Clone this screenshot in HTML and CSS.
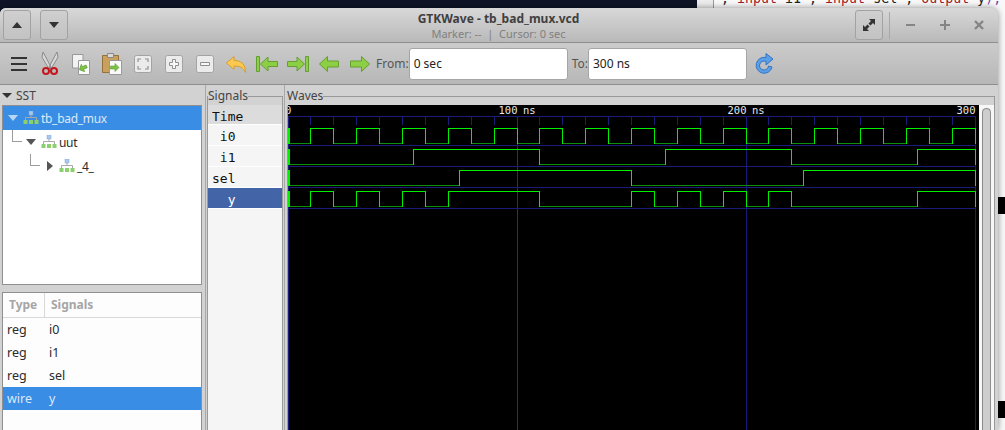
FILE: index.html
```html
<!DOCTYPE html>
<html lang="en">
<head>
  <meta charset="UTF-8">
  <meta name="viewport" content="width=device-width, initial-scale=1.0">
  <title>GTKWave - tb_bad_mux.vcd</title>
  <link rel="stylesheet" href="styles.css">
</head>
<body>
  <div class="desktop">
    <div class="terminal"></div>
    <div class="editor">
      <span class="code">, <b>input</b> i1 , <b>input</b> sel , <b>output</b> y<i>);</i></span>
    </div>
    <div class="edge-mark edge-mark-a"></div>
    <div class="edge-mark edge-mark-b"></div>

    <div class="window">
      <header class="titlebar">
        <div class="title-left">
          <button class="title-btn"><svg width="12" height="8" viewBox="0 0 12 8"><path d="M6 1 11 7H1z" fill="#333"/></svg></button>
          <button class="title-btn"><svg width="12" height="8" viewBox="0 0 12 8"><path d="M1 1H11L6 7z" fill="#333"/></svg></button>
        </div>
        <div class="title-text">
          <div class="title-main">GTKWave - tb_bad_mux.vcd</div>
          <div class="title-sub">Marker: --  |  Cursor: 0 sec</div>
        </div>
        <div class="title-right">
          <button class="title-btn"><svg width="14" height="14" viewBox="0 0 14 14"><path d="M13 1V7L11 5 8.500 7.500 6.500 5.500 9 3 7 1zM1 13V7L3 9 5.500 6.500 7.500 8.500 5 11 7 13z" fill="#333"/></svg></button>
          <span class="title-sep"></span>
          <svg class="win-ctl" width="12" height="12" viewBox="0 0 12 12"><path d="M1 6H10" stroke="#858585" stroke-width="2"/></svg>
          <svg class="win-ctl" width="12" height="12" viewBox="0 0 12 12"><path d="M1 6H11M6 1V11" stroke="#858585" stroke-width="2"/></svg>
          <svg class="win-ctl" width="12" height="12" viewBox="0 0 12 12"><path d="M2 2 10 10M10 2 2 10" stroke="#858585" stroke-width="2.400"/></svg>
        </div>
      </header>

      <div class="toolbar">
        <span class="tool"><svg width="24" height="24" viewBox="0 0 24 24"><path d="M4 7H20M4 13H20M4 19H20" transform="translate(0 -1)" stroke="#333" stroke-width="2"/></svg></span>
        <span class="tool"><svg width="24" height="24" viewBox="0 0 24 24">
          <path d="M5 0 13 15 11 17 4 5zM19 0 11 15 13 17 20 5z" fill="#d8d8d8" stroke="#8a8a8a"/>
          <circle cx="8" cy="19" r="3" fill="none" stroke="#c4161c" stroke-width="2"/>
          <circle cx="16" cy="19" r="3" fill="none" stroke="#c4161c" stroke-width="2"/>
        </svg></span>
        <span class="tool"><svg width="24" height="24" viewBox="0 0 24 24">
          <path d="M3.500 2.500H14V16H3.500z" fill="#f2f2f2" stroke="#999"/>
          <path d="M9.500 8.500H20.500V22.500H9.500z" fill="#fafafa" stroke="#999"/>
          <path d="M10 16 14 12V14.500H18V17.500H14V20z" transform="rotate(-25 14 16)" fill="#7cc243" stroke="#5b9a2c" stroke-width=".6"/>
        </svg></span>
        <span class="tool"><svg width="24" height="24" viewBox="0 0 24 24">
          <path d="M2.500 3.500H18.500V20.500H2.500z" fill="#c9a05e" stroke="#94713a"/>
          <path d="M7.500 1.500H13.500V5.500H7.500z" fill="#d9d9d9" stroke="#888"/>
          <path d="M9.500 8.500H21.500V22.500H9.500z" fill="#fafafa" stroke="#999"/>
          <path d="M19 15.500 15 11.500V14H10.500V17H15V19.500z" fill="#7cc243" stroke="#5b9a2c" stroke-width=".6"/>
        </svg></span>
        <span class="tool"><svg width="24" height="24" viewBox="0 0 24 24">
          <rect x="3.500" y="3.500" width="17" height="17" rx="2" fill="#ebebeb" stroke="#a3a3a3"/>
          <path d="M10 7H7V10M14 7H17V10M10 17H7V14M14 17H17V14" fill="none" stroke="#8f8f8f" stroke-width="1.200"/>
        </svg></span>
        <span class="tool"><svg width="24" height="24" viewBox="0 0 24 24">
          <rect x="3.500" y="3.500" width="17" height="17" rx="2" fill="#ebebeb" stroke="#a3a3a3"/>
          <path d="M10.500 7.500H13.500V10.500H16.500V13.500H13.500V16.500H10.500V13.500H7.500V10.500H10.500z" fill="#f7f7f7" stroke="#8f8f8f"/>
        </svg></span>
        <span class="tool"><svg width="24" height="24" viewBox="0 0 24 24">
          <rect x="3.500" y="3.500" width="17" height="17" rx="2" fill="#ebebeb" stroke="#a3a3a3"/>
          <path d="M7.500 10.500H16.500V13.500H7.500z" fill="#f7f7f7" stroke="#8f8f8f"/>
        </svg></span>
        <span class="tool"><svg width="24" height="24" viewBox="0 0 24 24">
          <path d="M2.500 11 10 4.500V8.500C17 8.500 21.500 12 21.500 20.500 19 15.500 16 14 10 14V17.500z" fill="#fbc94f" stroke="#d99e2b"/>
        </svg></span>
        <span class="tool"><svg width="24" height="24" viewBox="0 0 24 24">
          <path d="M1.500 4.500H4.500V19.500H1.500z" fill="#8ccf45" stroke="#649f30"/>
          <path d="M5.500 12 13 5V9.500H22.500V14.500H13V19z" fill="#8ccf45" stroke="#649f30"/>
        </svg></span>
        <span class="tool"><svg width="24" height="24" viewBox="0 0 24 24">
          <path d="M19.500 4.500H22.500V19.500H19.500z" fill="#8ccf45" stroke="#649f30"/>
          <path d="M18.500 12 11 5V9.500H1.500V14.500H11V19z" fill="#8ccf45" stroke="#649f30"/>
        </svg></span>
        <span class="tool"><svg width="24" height="24" viewBox="0 0 24 24">
          <path d="M2.500 12 10.500 4.500V9H21.500V15H10.500V19.500z" fill="#8ccf45" stroke="#649f30"/>
        </svg></span>
        <span class="tool"><svg width="24" height="24" viewBox="0 0 24 24">
          <path d="M21.500 12 13.500 4.500V9H2.500V15H13.500V19.500z" fill="#8ccf45" stroke="#649f30"/>
        </svg></span>
        <label class="range-label">From:</label>
        <input class="range-input" type="text" value="0 sec">
        <label class="range-label range-to">To:</label>
        <input class="range-input" type="text" value="300 ns">
        <span class="tool tool-reload"><svg width="24" height="24" viewBox="0 0 24 24">
          <path d="M14 5.500A8 8 0 1 0 20 15L16.500 14A4.500 4.500 0 1 1 14 9.500V13L21 7 14 1.500z" fill="#5b9fe8" stroke="#2f74c4"/>
        </svg></span>
      </div>

      <div class="panes">
        <aside class="sst">
          <div class="sst-head"><span class="arrow-down"></span>SST</div>
          <div class="tree">
            <div class="tree-row selected">
              <span class="twist twist-open"></span>
              <svg class="hier" width="16" height="14" viewBox="0 0 16 14"><use href="#hier-icon"/></svg>
              <span>tb_bad_mux</span>
            </div>
            <div class="tree-row level-1">
              <span class="twist twist-open"></span>
              <svg class="hier" width="16" height="14" viewBox="0 0 16 14"><use href="#hier-icon"/></svg>
              <span>uut</span>
            </div>
            <div class="tree-row level-2">
              <span class="twist twist-closed"></span>
              <svg class="hier" width="16" height="14" viewBox="0 0 16 14"><use href="#hier-icon"/></svg>
              <span>_4_</span>
            </div>
          </div>
          <div class="sig-list">
            <div class="sig-head"><span>Type</span><span>Signals</span></div>
            <div class="sig-row"><span>reg</span><span>i0</span></div>
            <div class="sig-row"><span>reg</span><span>i1</span></div>
            <div class="sig-row"><span>reg</span><span>sel</span></div>
            <div class="sig-row selected"><span>wire</span><span>y</span></div>
          </div>
        </aside>

        <fieldset class="frame signals">
          <legend>Signals</legend>
          <div class="name-row name-time">Time</div>
          <div class="name-row"> i0</div>
          <div class="name-row"> i1</div>
          <div class="name-row">sel</div>
          <div class="name-row name-selected">  y</div>
        </fieldset>

        <div class="handle"></div>

        <fieldset class="frame waves">
          <legend>Waves</legend>
          <div class="wave-body">
            <svg class="wave-canvas" width="691" height="325" viewBox="288 105 691 325">
              <g class="grid">
                <path class="grid-major" d="M517.500 116V430"/>
                <path d="M288.500 116V430M746.500 116V430M975.500 116V430"/>
                <path d="M288 116.500H976M288 145.500H976M288 166.500H976M288 187.500H976M288 208.500H976"/>
                <path d="M310.500 116V125M333.500 116V125M356.500 116V125M379.500 116V125M402.500 116V125M425.500 116V125M448.500 116V125M471.500 116V125M494.500 116V125M539.500 116V125M562.500 116V125M585.500 116V125M608.500 116V125M631.500 116V125M654.500 116V125M677.500 116V125M700.500 116V125M723.500 116V125M768.500 116V125M791.500 116V125M814.500 116V125M837.500 116V125M860.500 116V125M883.500 116V125M906.500 116V125M929.500 116V125M952.500 116V125"/>
              </g>
              <g class="wave-low">
                <path d="M288 143.500H310M333 143.500H356M379 143.500H402M425 143.500H448M471 143.500H494M517 143.500H539M562 143.500H585M608 143.500H631M654 143.500H677M700 143.500H723M746 143.500H768M791 143.500H814M837 143.500H860M883 143.500H906M929 143.500H952"/>
                <path d="M288 164.500H413M539 164.500H665M791 164.500H917"/>
                <path d="M288 185.500H459M631 185.500H803"/>
                <path d="M288 206.500H310M333 206.500H356M379 206.500H402M425 206.500H448M539 206.500H631M654 206.500H677M700 206.500H723M746 206.500H768M791 206.500H917"/>
              </g>
              <g class="wave-high">
                <path d="M310.500 143.500V128.500H333.500V143.500M356.500 143.500V128.500H379.500V143.500M402.500 143.500V128.500H425.500V143.500M448.500 143.500V128.500H471.500V143.500M494.500 143.500V128.500H517.500V143.500M539.500 143.500V128.500H562.500V143.500M585.500 143.500V128.500H608.500V143.500M631.500 143.500V128.500H654.500V143.500M677.500 143.500V128.500H700.500V143.500M723.500 143.500V128.500H746.500V143.500M768.500 143.500V128.500H791.500V143.500M814.500 143.500V128.500H837.500V143.500M860.500 143.500V128.500H883.500V143.500M906.500 143.500V128.500H929.500V143.500M952.500 143.500V128.500H975.500V143.500"/>
                <path d="M413.500 164.500V149.500H539.500V164.500M665.500 164.500V149.500H791.500V164.500M917.500 164.500V149.500H975.500V164.500"/>
                <path d="M459.500 185.500V170.500H631.500V185.500M803.500 185.500V170.500H975.500V185.500"/>
                <path d="M310.500 206.500V191.500H333.500V206.500M356.500 206.500V191.500H379.500V206.500M402.500 206.500V191.500H425.500V206.500M448.500 206.500V191.500H539.500V206.500M631.500 206.500V191.500H654.500V206.500M677.500 206.500V191.500H700.500V206.500M723.500 206.500V191.500H746.500V206.500M768.500 206.500V191.500H791.500V206.500M917.500 206.500V191.500H975.500V206.500"/>
              </g>
              <path class="wave-start" d="M289 128V144M289 149V165M289 170V186M289 191V207"/>
              <g class="wave-time">
                <text x="285" y="114">0</text>
                <text x="498.500" y="114">100</text>
                <text x="523" y="114">ns</text>
                <text x="727.500" y="114">200</text>
                <text x="752" y="114">ns</text>
                <text x="956.500" y="114">300</text>
              </g>
            </svg>
            <div class="wave-scroll"><div class="wave-thumb"></div></div>
          </div>
        </fieldset>
      </div>
    </div>
  </div>

  <svg class="defs" width="0" height="0">
    <g id="hier-icon">
      <rect x="6" y="0" width="4" height="4" fill="#a9c8ee" stroke="#7fa6d6" stroke-width=".5"/>
      <path d="M2.500 9V6.500H13.500V9M8 4V6.500" fill="none" stroke="#a8a8a8"/>
      <rect x="0.500" y="9" width="4" height="4" fill="#8ccf6e"/>
      <rect x="6" y="9" width="4" height="4" fill="#8ccf6e"/>
      <rect x="11.500" y="9" width="4" height="4" fill="#8ccf6e"/>
    </g>
  </svg>
</body>
</html>
```

FILE: styles.css
```css
* {
  box-sizing: border-box;
}

body {
  margin: 0;
  font-family: "Noto Sans", sans-serif;
  background-color: #f4f4f4;
}

.defs {
  position: absolute;
}

.desktop {
  position: relative;
  width: 1005px;
  height: 430px;
  overflow: hidden;
}

.terminal {
  position: absolute;
  left: 0;
  top: 0;
  width: 697px;
  height: 430px;
  background-color: #0f1526;
}

.editor {
  position: absolute;
  left: 697px;
  top: 0;
  width: 308px;
  height: 430px;
  padding-left: 24px;
  background: linear-gradient(to right, #ececec 16px, #9a9a9a 16px, #9a9a9a 17px, #f8f8f8 17px);
}

.code {
  display: block;
  margin-top: -9px;
  font: 13.3px/16px "DejaVu Sans Mono", monospace;
  color: #222;
  white-space: pre;
}

.code b {
  font-weight: normal;
  color: #a3182e;
}

.code i {
  font-style: normal;
  color: #7a3fb0;
}

.edge-mark {
  position: absolute;
  left: 998px;
  width: 7px;
  height: 17px;
  background-color: #000;
}

.edge-mark-a {
  top: 197px;
}

.edge-mark-b {
  top: 401px;
}

.window {
  position: absolute;
  left: 0;
  top: 8px;
  width: 998px;
  height: 422px;
  overflow: hidden;
  background-color: #d2d2d2;
  border-top-left-radius: 6px;
  border-top-right-radius: 8px;
  box-shadow: 0 0 6px rgba(0, 0, 0, 0.45);
}

/* title bar */
.titlebar {
  display: grid;
  grid-template-columns: 1fr auto 1fr;
  align-items: center;
  height: 35px;
  padding: 0 0 0 3px;
  background: linear-gradient(#d8d8d8, #b9b9b9);
  border-bottom: 1px solid #8e8e8e;
}

.title-left {
  display: flex;
  gap: 9px;
}

.title-right {
  display: flex;
  align-items: center;
  justify-content: flex-end;
}

.title-btn {
  display: flex;
  align-items: center;
  justify-content: center;
  width: 28px;
  height: 30px;
  padding: 0;
  background: linear-gradient(#cfcfcf, #c2c2c2);
  border: 1px solid #a2a2a2;
  border-radius: 3px;
}

.title-sep {
  width: 1px;
  height: 27px;
  margin: 0 15px 0 6px;
  background-color: #a8a8a8;
}

.win-ctl {
  margin-right: 22px;
}

.win-ctl:last-child {
  margin-right: 13px;
}

.title-text {
  margin-right: 4px;
  text-align: center;
}

.title-main {
  padding-top: 1px;
  font-size: 12px;
  font-weight: bold;
  line-height: 17px;
  color: #404040;
}

.title-sub {
  font-size: 11px;
  line-height: 14px;
  color: #808080;
  white-space: pre;
}

/* toolbar */
.toolbar {
  display: flex;
  align-items: center;
  height: 42px;
  padding-left: 3px;
  background: linear-gradient(#cbcbcb, #b7b7b7);
  border-bottom: 1px solid #8e8e8e;
}

.tool {
  display: flex;
  justify-content: center;
  flex: none;
  width: 31px;
}

.tool-reload {
  margin-left: 2px;
}

.range-label {
  margin-left: 1px;
  font-size: 12px;
  color: #555;
}

.range-to {
  margin-left: 4px;
}

.range-input {
  width: 159px;
  height: 32px;
  padding: 0 0 0 4px;
  font-family: "Noto Sans", sans-serif;
  font-size: 12px;
  color: #222;
  background-color: #fff;
  border: 1px solid #a5a5a5;
  border-radius: 3px;
}

/* panes */
.panes {
  display: flex;
  height: 345px;
}

.sst {
  flex: none;
  width: 206px;
  padding: 0 3px 0 2px;
  border-right: 1px solid #a8a8a8;
}

.sst-head {
  display: flex;
  align-items: center;
  gap: 4px;
  height: 20px;
  font-size: 12px;
  color: #444;
}

.arrow-down {
  width: 0;
  height: 0;
  border-left: 5px solid transparent;
  border-right: 5px solid transparent;
  border-top: 5px solid #333;
}

.tree {
  height: 180px;
  background-color: #fff;
  border: 1px solid #8f8f8f;
}

.tree-row {
  position: relative;
  display: flex;
  align-items: center;
  height: 24px;
  padding-left: 5px;
  font-size: 12px;
  letter-spacing: -0.3px;
  color: #2b2b2b;
}

.tree-row.selected {
  color: #dbe9fa;
  background-color: #3a8de4;
}

.tree-row.level-1 {
  padding-left: 23px;
}

.tree-row.level-2 {
  padding-left: 44px;
}

.level-1::before,
.level-2::before {
  content: "";
  position: absolute;
  top: 0;
  width: 9px;
  height: 11px;
  border-left: 1px solid #9c9c9c;
  border-bottom: 1px solid #9c9c9c;
}

.level-1::before {
  left: 9px;
}

.level-2::before {
  left: 27px;
}

.twist {
  flex: none;
  width: 0;
  height: 0;
}

.twist-open {
  margin-right: 5px;
  border-left: 5px solid transparent;
  border-right: 5px solid transparent;
  border-top: 6px solid #555;
}

.selected .twist-open {
  border-top-color: #b8d6f6;
}

.twist-closed {
  margin-right: 6px;
  border-top: 5px solid transparent;
  border-bottom: 5px solid transparent;
  border-left: 6px solid #555;
}

.hier {
  flex: none;
  margin-right: 2px;
}

.sig-list {
  height: 145px;
  margin-top: 7px;
  background-color: #fdfdfd;
  border: 1px solid #8f8f8f;
  border-bottom: none;
  font-size: 12.5px;
  color: #2b2b2b;
}

.sig-head,
.sig-row {
  display: grid;
  grid-template-columns: 42px 1fr;
}

.sig-head {
  height: 25px;
  line-height: 23px;
  font-size: 12px;
  font-weight: bold;
  color: #a6a6a6;
  border-bottom: 1px solid #d8d8d8;
}

.sig-head span {
  padding-left: 6px;
}

.sig-head span:first-child {
  border-right: 1px solid #d8d8d8;
}

.sig-row {
  height: 23px;
  line-height: 23px;
}

.sig-row span {
  padding-left: 4px;
}

.sig-row.selected {
  color: #dbe9fa;
  background-color: #3a8de4;
}

/* signal names and waves */
.frame {
  min-width: 0;
  margin: 1px 0 0;
  padding: 0;
  border: 1px solid #999;
  border-bottom: none;
}

.frame legend {
  height: 20px;
  margin-bottom: -1px;
  padding: 0;
  font-size: 12px;
  line-height: 20px;
  color: #444;
}

.signals {
  flex: none;
  width: 76px;
  margin-left: 1px;
  background-color: transparent;
}

.name-row {
  height: 21px;
  padding-left: 4px;
  font: 13px/23px "DejaVu Sans Mono", monospace;
  white-space: pre;
  color: #111;
  background-color: #f5f5f5;
  border-bottom: 1px solid #fff;
}

.name-time {
  height: 20px;
  line-height: 23px;
  background-color: #dcdcdc;
}

.name-selected {
  color: #fff;
  background-color: #4464a8;
}

.signals::after {
  content: "";
  display: block;
  height: 222px;
  background-color: #f5f5f5;
}

.handle {
  flex: none;
  width: 1px;
  margin: 0 2px 0 1px;
  background-color: #a8a8a8;
}

.waves {
  flex: none;
  width: 708px;
}

.waves legend {
  margin-left: -1px;
}

.wave-body {
  display: flex;
  height: 325px;
}

.wave-canvas {
  display: block;
  flex: none;
  background-color: #000;
}

.grid path {
  fill: none;
  stroke: #1c1c78;
  stroke-width: 1;
  shape-rendering: crispEdges;
}

.grid .grid-major {
  stroke: #33333f;
}

.wave-low path {
  fill: none;
  stroke: #0b8f0b;
  stroke-width: 1;
  shape-rendering: crispEdges;
}

.wave-high path {
  fill: none;
  stroke: #00f000;
  stroke-width: 1;
  shape-rendering: crispEdges;
}

.wave-start {
  fill: none;
  stroke: #00f000;
  stroke-width: 2;
  shape-rendering: crispEdges;
}

.wave-time text {
  font: 10.5px "DejaVu Sans Mono", monospace;
  fill: #e8e8e8;
}

.wave-scroll {
  flex: 1;
  padding: 3px 3px 0;
  background-color: #f7f7f7;
}

.wave-thumb {
  height: 330px;
  background-color: #cdcdcd;
  border: 1px solid #8c8c8c;
  border-bottom: none;
  border-radius: 5px 5px 0 0;
}
```
